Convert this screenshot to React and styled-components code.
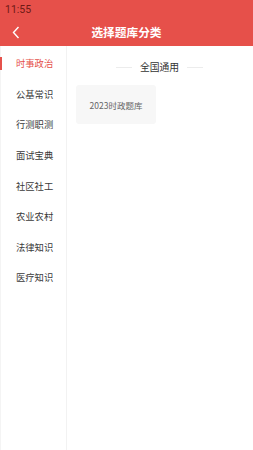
import React, { useState } from "react";
import styled, { createGlobalStyle } from "styled-components";

const Global = createGlobalStyle`
  html, body { margin: 0; padding: 0; background: #fff; }
  body { font-family: "Noto Sans CJK SC", "Noto Sans", Roboto, sans-serif; }
`;

const Page = styled.div`
  width: 253px;
  height: 450px;
  display: flex;
  flex-direction: column;
  overflow: hidden;
`;

const Top = styled.div`
  background: #e6504a;
  color: #fff;
`;

const StatusBar = styled.div`
  height: 17px;
  box-sizing: border-box;
  padding: 2px 0 0 5px;
  display: flex;
  align-items: center;
  font-family: Roboto, sans-serif;
  font-size: 10.5px;
  color: #6e1a16;
`;

const NavBar = styled.div`
  height: 29px;
  display: flex;
  align-items: center;
  justify-content: center;
  position: relative;
`;

const Back = styled.button`
  position: absolute;
  left: 9px;
  top: 7px;
  width: 14px;
  height: 16px;
  padding: 0;
  border: 0;
  background: none;
  display: flex;
  align-items: center;
  justify-content: center;
`;

const Title = styled.h1`
  margin: 0;
  font-size: 11.7px;
  font-weight: 700;
`;

const Body = styled.div`
  flex: 1;
  display: flex;
  min-height: 0;
`;

const Side = styled.div`
  width: 67px;
  border-right: 1px solid #f2f2f2;
  border-left: 1px solid #f4f4f4;
  display: flex;
  flex-direction: column;
  padding-top: 2px;
  box-sizing: border-box;
`;

const SideItem = styled.div`
  position: relative;
  height: 30.6px;
  display: flex;
  align-items: center;
  padding-left: 15px;
  font-size: 9.3px;
  color: ${(p) => (p.$active ? "#e5514b" : "#3a3a3a")};
  &::before {
    content: "";
    display: ${(p) => (p.$active ? "block" : "none")};
    position: absolute;
    left: -1px;
    top: 9px;
    width: 2px;
    height: 13px;
    background: #e5514b;
  }
`;

const Main = styled.div`
  flex: 1;
  padding: 12px 10px 0 9px;
`;

const SectionHead = styled.div`
  display: flex;
  align-items: center;
  justify-content: center;
  gap: 8px;
  font-size: 9.8px;
  color: #333;
  height: 18px;
  &::before, &::after {
    content: "";
    width: 16px;
    height: 1px;
    background: #ececec;
  }
`;

const Grid = styled.div`
  margin-top: 9px;
  display: grid;
  grid-template-columns: 80px;
`;

const Card = styled.div`
  height: 39px;
  border-radius: 3px;
  background: #f7f7f7;
  display: flex;
  align-items: center;
  justify-content: center;
  font-size: 8.5px;
  color: #666;
`;

const cats = ["时事政治", "公基常识", "行测职测", "面试宝典", "社区社工", "农业农村", "法律知识", "医疗知识"];

export default function App() {
  const [active, setActive] = useState(0);
  return (
    <Page>
      <Global />
      <Top>
        <StatusBar>11:55</StatusBar>
        <NavBar>
          <Back aria-label="返回">
            <svg width="8" height="13" viewBox="0 0 8 13">
              <path d="M6.5 1 L1.5 6.5 L6.5 12" fill="none" stroke="#fff" strokeWidth="1.4" />
            </svg>
          </Back>
          <Title>选择题库分类</Title>
        </NavBar>
      </Top>
      <Body>
        <Side>
          {cats.map((c, i) => (
            <SideItem key={c} $active={i === active} onClick={() => setActive(i)}>
              {c}
            </SideItem>
          ))}
        </Side>
        <Main>
          <SectionHead>全国通用</SectionHead>
          <Grid>
            <Card>2023时政题库</Card>
          </Grid>
        </Main>
      </Body>
    </Page>
  );
}
